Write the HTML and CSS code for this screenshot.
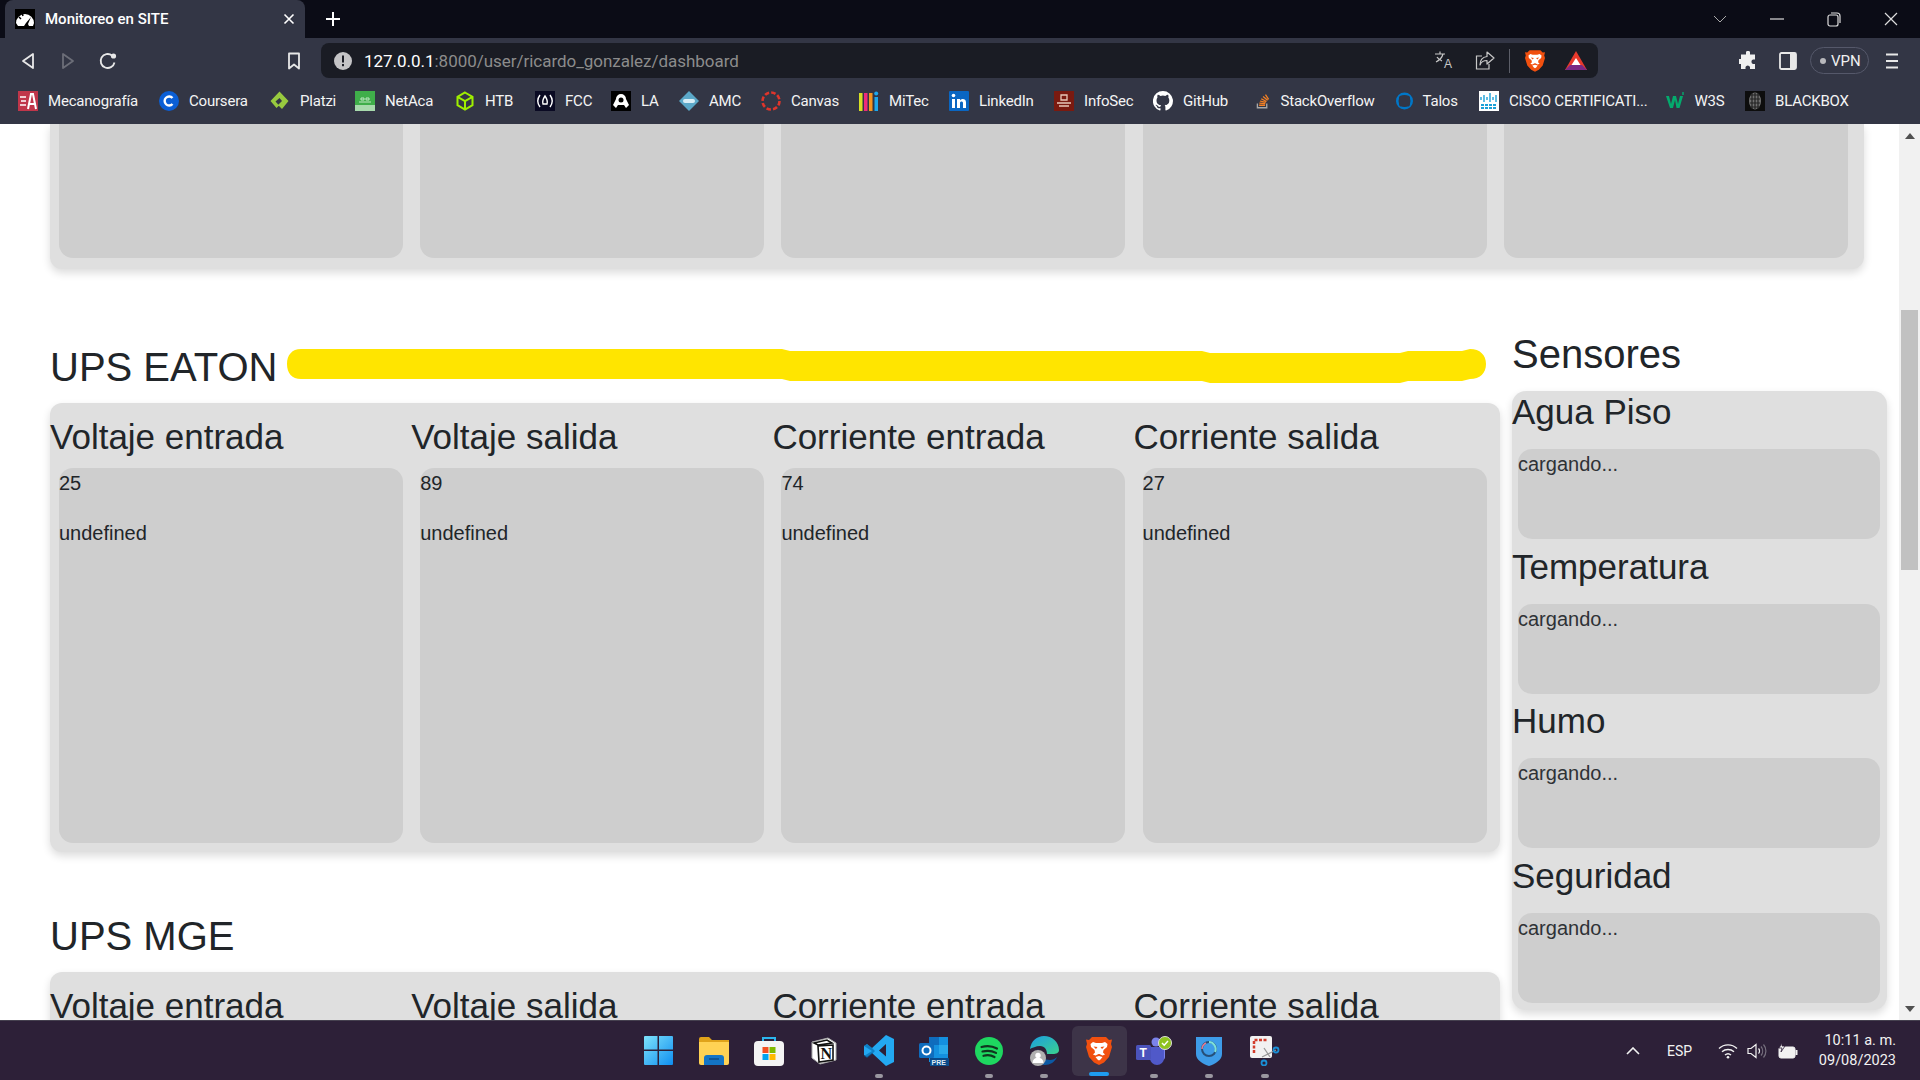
FILE: index.html
```html
<!DOCTYPE html>
<html lang="es">
<head>
<meta charset="utf-8">
<title>Monitoreo en SITE</title>
<link rel="stylesheet" href="styles.css">
</head>
<body>
<svg class="defs" width="0" height="0" aria-hidden="true">
  <defs>
    <symbol id="brave" viewBox="0 0 26 30">
      <path fill="#f1500f" d="M6 1h14l3 3 3-.5-1 4.500 1 3-3 10-5 5.500-5 2.500-5-2.500-5-5.500-3-10 1-3-1-4.500 3 .5z"/>
      <path fill="#fff" d="M7 6l3 1h6l3-1 2.500 2-.5 3-3.500 3-.5 2.500 2 2-2.500 1-3-1.500h-1l-3 1.500-2.500-1 2-2-.5-2.500L5 11l-.5-3zM9.500 21l3.500-1 3.500 1-2 2.500-1.500 1-1.500-1z"/>
      <path fill="#f1500f" d="M7.500 10.500l4 .5-1.500 2zM18.500 10.500l-4 .5 1.500 2z"/>
    </symbol>
    <linearGradient id="gWin" x1="0" y1="0" x2="1" y2="1"><stop offset="0" stop-color="#7ee3fb"/><stop offset="1" stop-color="#0f8ef0"/></linearGradient>
    <linearGradient id="gEdge" x1="0" y1="0" x2="1" y2="1"><stop offset="0" stop-color="#1b9de2"/><stop offset="1" stop-color="#3bd28e"/></linearGradient>
  </defs>
</svg>

<div class="screen">
  <header class="tabstrip">
    <div class="tab">
      <svg class="favicon" viewBox="0 0 20 20"><rect width="20" height="20" fill="#000"/><path fill="#fff" d="M1 14a9 9 0 0 1 18 0l-1 3h-4l-1-2 3-7-5 6-2 3H3z"/><path stroke="#000" stroke-width="1.500" d="M7 4l1 3M4 8l2 2"/></svg>
      <span class="tab-title">Monitoreo en SITE</span>
      <svg class="tab-close" viewBox="0 0 12 12"><path d="M1.500 1.500l9 9M10.500 1.500l-9 9" stroke="#fff" stroke-width="1.600"/></svg>
    </div>
    <div class="newtab"><svg width="16" height="16" viewBox="0 0 16 16"><path d="M8 1v14M1 8h14" stroke="#fff" stroke-width="2"/></svg></div>
    <div class="winctl">
      <div class="winbtn"><svg width="14" height="8" viewBox="0 0 14 8"><path d="M1 1l6 6 6-6" fill="none" stroke="#aaa" stroke-width="1"/></svg></div>
      <div class="winbtn"><svg width="14" height="2" viewBox="0 0 14 2"><path d="M0 1h14" stroke="#ddd" stroke-width="1.200"/></svg></div>
      <div class="winbtn"><svg width="14" height="15" viewBox="0 0 14 15"><rect x="1" y="3" width="10" height="11" rx="2" fill="none" stroke="#ddd" stroke-width="1.200"/><path d="M4 1h6a3 3 0 0 1 3 3v7" fill="none" stroke="#ddd" stroke-width="1.200"/></svg></div>
      <div class="winbtn"><svg width="14" height="14" viewBox="0 0 14 14"><path d="M1 1l12 12M13 1L1 13" stroke="#ddd" stroke-width="1.200"/></svg></div>
    </div>
  </header>

  <nav class="toolbar">
    <div class="tb-btn"><svg width="14" height="18" viewBox="0 0 14 18"><path d="M12 2v14L2 9z" fill="none" stroke="#e8e8e8" stroke-width="1.800" stroke-linejoin="round"/></svg></div>
    <div class="tb-btn"><svg width="14" height="18" viewBox="0 0 14 18"><path d="M2 2v14l10-7z" fill="none" stroke="#6c6e78" stroke-width="1.800" stroke-linejoin="round"/></svg></div>
    <div class="tb-btn"><svg width="18" height="18" viewBox="0 0 18 18"><path d="M15.500 10.500a7 7 0 1 1-2.500-7" fill="none" stroke="#e8e8e8" stroke-width="1.800"/><circle cx="14.500" cy="4" r="2.600" fill="#e8e8e8"/></svg></div>
    <div class="tb-btn tb-bookmark"><svg width="14" height="18" viewBox="0 0 14 18"><path d="M2 1.500h10v15l-5-4-5 4z" fill="none" stroke="#e8e8e8" stroke-width="1.800" stroke-linejoin="round"/></svg></div>
    <div class="omnibox">
      <svg class="omni-info" width="18" height="18" viewBox="0 0 18 18"><circle cx="9" cy="9" r="9" fill="#c4c4c6"/><rect x="8" y="3.500" width="2" height="7" fill="#1a1c24"/><rect x="8" y="12" width="2" height="2.200" fill="#1a1c24"/></svg>
      <div class="url"><span class="url-host">127.0.0.1</span><span class="url-rest">:8000/user/ricardo_gonzalez/dashboard</span></div>
      <div class="omni-act"><svg width="20" height="21" viewBox="0 0 20 21"><path d="M1 4h10M6 1.500V4M9 4c-1 4-3 6-7 8M3 7c1 2 3 3 5 4" fill="none" stroke="#c8c8c8" stroke-width="1.200"/><text class="glyph" x="10" y="18" font-size="12" fill="#c8c8c8">A</text></svg></div>
      <div class="omni-act"><svg width="20" height="19" viewBox="0 0 20 19"><path d="M7 5H1.500v13h12.500v-5" fill="none" stroke="#c8c8c8" stroke-width="1.200"/><path d="M12 1l7 6-7 6V9.500C8 9.500 6 11 5 14c0-5 3-8 7-8.500z" fill="none" stroke="#c8c8c8" stroke-width="1.200" stroke-linejoin="round"/></svg></div>
      <div class="omni-sep"></div>
      <div class="omni-act"><svg width="20" height="24"><use href="#brave"/></svg></div>
      <div class="omni-act"><svg width="22" height="20" viewBox="0 0 22 20"><path fill="#e8392c" d="M11 0L0 19h22z"/><path fill="#7b2a85" d="M0 19h22l-5-5H5z"/><path fill="#fff" d="M11 7l-4.500 7h9z"/></svg></div>
    </div>
    <div class="tb-btn tb-after"><svg width="19" height="19" viewBox="0 0 19 19"><path fill="#f0f0f0" d="M7 1a2.200 2.200 0 0 1 4 0v2.500h5v5h-2a2.400 2.400 0 0 0 0 4.500h2V18H11v-2a2.400 2.400 0 0 0-4.500 0v2H2v-5H.8a2.500 2.500 0 0 1 0-5H2V3.500h5z"/></svg></div>
    <div class="tb-btn"><svg width="18" height="18" viewBox="0 0 18 18"><rect x="1" y="1" width="16" height="16" rx="1.500" fill="none" stroke="#e8e8e8" stroke-width="1.800"/><rect x="11" y="1" width="6" height="16" fill="#e8e8e8"/></svg></div>
    <div class="vpn"><span class="vpn-dot"></span>VPN</div>
    <div class="tb-btn tb-menu"><svg width="14" height="16" viewBox="0 0 14 16"><path d="M1 1.500h12M1 8h12M1 14.500h12" stroke="#e8e8e8" stroke-width="1.800"/></svg></div>
  </nav>

  <div class="bookmarks">
    <div class="bm"><svg viewBox="0 0 20 20"><rect width="20" height="20" fill="#c0364a"/><path d="M2 6h6M3 10h5M2 14h6" stroke="#fff" stroke-width="1.400"/><path d="M10 18l3-15h2l3 15M11.500 13h5" fill="none" stroke="#fff" stroke-width="2"/></svg><span>Mecanografía</span></div>
    <div class="bm"><svg viewBox="0 0 20 20"><circle cx="10" cy="10" r="10" fill="#0b5fd6"/><path d="M13.500 7a4.500 4.500 0 1 0 0 6" fill="none" stroke="#fff" stroke-width="2.400"/></svg><span>Coursera</span></div>
    <div class="bm"><svg viewBox="0 0 20 20"><path d="M9.500 0.500L18.500 10l-6.500 8-4-4 4-4-2.500-3-4 3.500 3.500 4-2.500 2.500L0.500 10z" fill="#98ca3f"/></svg><span>Platzi</span></div>
    <div class="bm"><svg viewBox="0 0 20 20"><rect width="20" height="20" fill="#3fae4a"/><rect y="14" width="20" height="6" fill="#fff" opacity=".55"/><path d="M6 7h3v2H6zM11 7h3v2h-3zM4 11h12" stroke="#bfe8c2" fill="none"/></svg><span>NetAca</span></div>
    <div class="bm"><svg viewBox="0 0 20 20"><path d="M10 1.500l7.500 4.300v8.400L10 18.500l-7.500-4.300V5.800zM2.500 5.800L10 10l7.500-4.200M10 10v8.500" fill="none" stroke="#9fef00" stroke-width="2"/></svg><span>HTB</span></div>
    <div class="bm"><svg viewBox="0 0 20 20"><rect width="20" height="20" fill="#0a0a23"/><path d="M5 4c-3 4-3 8 0 12M15 4c3 4 3 8 0 12" fill="none" stroke="#fff" stroke-width="1.400"/><path d="M10 5c2 3 3 5 2 8h-4c-1-3 0-5 2-8z" fill="none" stroke="#fff" stroke-width="1.400"/></svg><span>FCC</span></div>
    <div class="bm"><svg viewBox="0 0 20 20"><rect width="20" height="20" fill="#000"/><path d="M10 3a5 5 0 0 1 5 5l3 6-3 3-2-3H7l-2 3-3-3 3-6a5 5 0 0 1 5-5z" fill="#fff"/><circle cx="10" cy="9" r="2.500" fill="#000"/></svg><span>LA</span></div>
    <div class="bm"><svg viewBox="0 0 20 20"><path d="M10 0l10 10-10 10L0 10z" fill="#5ba8c8"/><rect x="4" y="8" width="12" height="4" rx="2" fill="#d8eef6"/></svg><span>AMC</span></div>
    <div class="bm"><svg viewBox="0 0 20 20"><circle cx="10" cy="10" r="8.500" fill="none" stroke="#e0352b" stroke-width="2.600" stroke-dasharray="4.500 2.170"/></svg><span>Canvas</span></div>
    <div class="bm"><svg viewBox="0 0 20 20"><rect x="0" y="2" width="3.500" height="18" fill="#d7df23"/><rect x="5" y="2" width="3.500" height="18" fill="#ee2a7b"/><rect x="10" y="2" width="3.500" height="18" fill="#f7941d"/><rect x="15.500" y="6" width="3.500" height="14" fill="#1ca7ec"/><circle cx="17.200" cy="2.500" r="2" fill="#1ca7ec"/></svg><span>MiTec</span></div>
    <div class="bm"><svg viewBox="0 0 20 20"><rect width="20" height="20" rx="1" fill="#0a66c2"/><path d="M3 8h3v9H3zM8 8h3v1.500c1-2 6-2.500 6 2V17h-3v-5c0-2-3-2-3 0v5H8z" fill="#fff"/><circle cx="4.500" cy="4.500" r="1.800" fill="#fff"/></svg><span>LinkedIn</span></div>
    <div class="bm"><svg viewBox="0 0 20 20"><rect width="20" height="20" fill="#7a1a10"/><path d="M7 4h6v5H7zM3 12h14M5 15h10" stroke="#e8c8b8" fill="none" stroke-width="1.300"/></svg><span>InfoSec</span></div>
    <div class="bm"><svg viewBox="0 0 20 20"><path fill="#fff" d="M10 0a10 10 0 0 0-3.200 19.500c.5.100.7-.2.700-.5v-1.800c-2.800.6-3.400-1.300-3.400-1.300-.4-1.100-1.100-1.500-1.100-1.500-.9-.6.100-.6.100-.6 1 .1 1.500 1 1.500 1 .9 1.500 2.300 1.100 2.900.8.100-.6.300-1.100.6-1.300-2.200-.3-4.600-1.100-4.600-5 0-1.100.4-2 1-2.700-.1-.2-.4-1.300.1-2.700 0 0 .8-.3 2.800 1a9 9 0 0 1 5 0c1.900-1.300 2.800-1 2.800-1 .5 1.400.2 2.500.1 2.700.6.700 1 1.600 1 2.700 0 3.900-2.300 4.700-4.600 5 .4.300.7.900.7 1.900V19c0 .3.200.6.700.5A10 10 0 0 0 10 0z"/></svg><span>GitHub</span></div>
    <div class="bm bm-narrow"><svg viewBox="0 0 20 20"><path d="M4 13v5h11v-5" fill="none" stroke="#a8a8a8" stroke-width="1.600"/><path d="M6 15h7M6.300 12.500l7 .5M7 10l6.800 1.600M8.500 7.300l6.200 3.300M10.700 4.600l5.300 4.500M13.500 2.500l3.700 5.500" stroke="#f48024" stroke-width="1.500"/></svg><span>StackOverflow</span></div>
    <div class="bm bm-narrow"><svg viewBox="0 0 20 20"><circle cx="10" cy="10" r="8.500" fill="none" stroke="#0077c8" stroke-width="3"/><rect x="3.500" y="3.500" width="13" height="13" rx="3" fill="#333645"/></svg><span>Talos</span></div>
    <div class="bm"><svg viewBox="0 0 20 20"><rect width="20" height="20" fill="#fff"/><path d="M2 6v3M5 4v7M8 6v3M11 2v9M14 6v3M17 4v7" stroke="#1ba0d7" stroke-width="1.400"/><path d="M2 14h16M2 17h16" stroke="#1ba0d7" stroke-width="2" stroke-dasharray="3 1"/></svg><span>CISCO CERTIFICATI...</span></div>
    <div class="bm"><svg viewBox="0 0 20 20"><path d="M1 5h3l2 8 2-8h3l2 8 2-8h3l-3.500 12h-3L10 9l-2 8H5z" fill="#04aa6d"/><path d="M17 1h2v3h-2z" fill="#04aa6d" opacity=".7"/></svg><span>W3S</span></div>
    <div class="bm"><svg viewBox="0 0 20 20"><rect width="20" height="20" fill="#0d0d0d"/><ellipse cx="10" cy="10" rx="6" ry="8.500" fill="#8a8a8a" opacity=".8"/><path d="M5 4h10M5 8h10M5 12h10M5 16h10M7 2v16M10 2v16M13 2v16" stroke="#222" stroke-width="1.200"/></svg><span>BLACKBOX</span></div>
  </div>

  <div class="viewport">
    <main class="page">
      <section class="panel panel-top">
        <div class="cell"><div class="card card-short"></div></div>
        <div class="cell"><div class="card card-short"></div></div>
        <div class="cell"><div class="card card-short"></div></div>
        <div class="cell"><div class="card card-short"></div></div>
        <div class="cell"><div class="card card-short"></div></div>
      </section>

      <div class="columns">
        <div class="col-main">
          <div class="heading-row">
            <h2>UPS EATON</h2>
            <svg class="scribble" width="1199" height="36" viewBox="0 0 1199 36"><path fill="#ffe500" d="M14 2H495l8 2H915l8 2H1113l8-2H1175l8-2c10 0 16 6 16 15s-6 15-16 15l-8 2H1121l-8 2H923l-8-2H503l-8-2H14C5 32 0 26 0 17S5 2 14 2z"/></svg>
          </div>
          <section class="panel panel-ups">
            <div class="cell"><h3>Voltaje entrada</h3><div class="card card-tall"><p>25</p><p>undefined</p></div></div>
            <div class="cell"><h3>Voltaje salida</h3><div class="card card-tall"><p>89</p><p>undefined</p></div></div>
            <div class="cell"><h3>Corriente entrada</h3><div class="card card-tall"><p>74</p><p>undefined</p></div></div>
            <div class="cell"><h3>Corriente salida</h3><div class="card card-tall"><p>27</p><p>undefined</p></div></div>
          </section>

          <h2 class="heading-next">UPS MGE</h2>
          <section class="panel panel-ups">
            <div class="cell"><h3>Voltaje entrada</h3></div>
            <div class="cell"><h3>Voltaje salida</h3></div>
            <div class="cell"><h3>Corriente entrada</h3></div>
            <div class="cell"><h3>Corriente salida</h3></div>
          </section>
        </div>

        <aside class="col-side">
          <h2>Sensores</h2>
          <section class="panel panel-side">
            <div class="sensor"><h3>Agua Piso</h3><div class="card card-sensor">cargando...</div></div>
            <div class="sensor"><h3>Temperatura</h3><div class="card card-sensor">cargando...</div></div>
            <div class="sensor"><h3>Humo</h3><div class="card card-sensor">cargando...</div></div>
            <div class="sensor"><h3>Seguridad</h3><div class="card card-sensor">cargando...</div></div>
          </section>
        </aside>
      </div>
    </main>
    <div class="scrollbar">
      <svg class="sb-arrow" width="10" height="6" viewBox="0 0 10 6"><path d="M5 0l5 6H0z" fill="#505050"/></svg>
      <div class="sb-thumb"></div>
      <svg class="sb-arrow sb-arrow-down" width="10" height="6" viewBox="0 0 10 6"><path d="M0 0h10L5 6z" fill="#505050"/></svg>
    </div>
  </div>

  <footer class="taskbar">
    <div class="task-icons">
      <div class="task"><svg width="29" height="29" viewBox="0 0 29 29"><path fill="url(#gWin)" d="M0 1a1 1 0 0 1 1-1h12.500v13.500H0zM15 0h13a1 1 0 0 1 1 1v12.500H15zM0 15h13.500v14H1a1 1 0 0 1-1-1zM15 15h14v13a1 1 0 0 1-1 1H15z"/></svg></div>
      <div class="task"><svg width="30" height="28" viewBox="0 0 30 28"><path fill="#e0a31a" d="M0 2a2 2 0 0 1 2-2h8l3 3h17v6H0z"/><path fill="#ffd254" d="M0 5h30v21a2 2 0 0 1-2 2H2a2 2 0 0 1-2-2z"/><path fill="#1475c6" d="M5 28v-7a3 3 0 0 1 3-3h14a3 3 0 0 1 3 3v7z"/><path d="M10 22h10" stroke="#0b4a85" stroke-width="1.400"/></svg></div>
      <div class="task"><svg width="30" height="30" viewBox="0 0 30 30"><path d="M9 7V2h12v5" fill="none" stroke="#2bb6ee" stroke-width="2"/><rect y="5" width="30" height="25" rx="4" fill="#f4f4f4"/><rect x="8.500" y="11" width="6" height="6" fill="#f25022"/><rect x="15.500" y="11" width="6" height="6" fill="#7fba00"/><rect x="8.500" y="18" width="6" height="6" fill="#00a4ef"/><rect x="15.500" y="18" width="6" height="6" fill="#ffb900"/></svg></div>
      <div class="task"><svg width="26" height="28" viewBox="0 0 26 28"><path d="M1 5l16-4 8 5v17l-16 4-8-6z" fill="#fff" stroke="#aaa"/><path d="M3 6l13-3 5 3-14 2zM7 9l15-1v15L8 25z" fill="#fff" stroke="#111" stroke-width="1.600"/><text class="glyph glyph-serif" x="9.500" y="22" font-size="16" font-weight="700" fill="#111">N</text></svg></div>
      <div class="task"><svg width="30" height="31" viewBox="0 0 30 31"><path fill="#23a9f2" d="M22 0l8 4v23l-8 4-14-13-5 4-3-2v-9l3-2 5 4zm0 9l-7 6.500 7 6z"/><path fill="#0065a9" d="M0 11l3-2 5 4 3 3-3 3-5 4-3-2 8-5z" opacity=".6"/></svg></div>
      <div class="task"><svg width="30" height="30" viewBox="0 0 30 30"><rect x="10" y="1" width="19" height="25" fill="#1490df"/><rect x="10" y="1" width="10" height="8" fill="#0f6cbd"/><rect x="20" y="9" width="9" height="9" fill="#28a8ea"/><rect y="7" width="15" height="15" rx="1.500" fill="#0f6cbd"/><circle cx="7.500" cy="14.500" r="4" fill="none" stroke="#fff" stroke-width="2"/><rect x="11" y="22" width="19" height="8" fill="#0a4a8a"/><text class="glyph" x="12.500" y="29" font-size="7" font-weight="700" fill="#dfeaf5">PRE</text></svg></div>
      <div class="task"><svg width="28" height="28" viewBox="0 0 28 28"><circle cx="14" cy="14" r="14" fill="#1ed760"/><path d="M6.500 10c5-1.500 11-1 15.500 1.500M7.500 14.500c4.500-1.200 9.500-.8 13.500 1.400M8.500 18.800c3.800-1 7.800-.6 11 1.200" fill="none" stroke="#10351f" stroke-width="2.200" stroke-linecap="round"/></svg></div>
      <div class="task"><svg width="30" height="30" viewBox="0 0 30 30"><path fill="url(#gEdge)" d="M1 13C2 5 8 0 15 0c8 0 15 6 15 14 0 3-3 4-6 4h-6c0-4-2-8-7-8-4 0-8 2-10 3z"/><path fill="#0c59a4" d="M9 13c2 8 7 11 12 11 3 0 5-1 7-3-2 5-7 8-12 8C9 29 5 22 9 13z"/><circle cx="9" cy="22" r="8" fill="#b0b0b0"/><circle cx="9" cy="19.500" r="2.700" fill="#fff"/><path d="M3.500 27a5.500 5.500 0 0 1 11 0z" fill="#fff"/></svg></div>
      <div class="task task-active"><svg width="26" height="30"><use href="#brave"/></svg></div>
      <div class="task"><svg width="36" height="30" viewBox="0 0 36 30"><circle cx="20" cy="6" r="4.500" fill="#7b83eb"/><rect x="12" y="11" width="17" height="13" rx="3" fill="#7b83eb"/><path d="M14 11h14v11a7 7 0 0 1-14 0z" fill="#5059c9"/><circle cx="29" cy="10" r="3.500" fill="#5059c9"/><rect x="0" y="9" width="15" height="15" rx="1.500" fill="#4b53bc"/><text class="glyph" x="3.500" y="21" font-size="12" font-weight="700" fill="#fff">T</text><circle cx="29" cy="7" r="6.500" fill="#8fc31f" stroke="#ddd"/><path d="M26 7l2.200 2.200L32 5" fill="none" stroke="#fff" stroke-width="1.500"/></svg></div>
      <div class="task"><svg width="26" height="30" viewBox="0 0 26 30"><path d="M0 1h26v17c0 6-7 10-13 12C7 28 0 24 0 18z" fill="#3e9ce8"/><circle cx="13" cy="13" r="7" fill="none" stroke="#264f78" stroke-width="2"/><path d="M13 6a7 7 0 0 1 6 10" fill="none" stroke="#7ee0d8" stroke-width="2"/><path d="M6 13a7 7 0 0 1 4-6" fill="none" stroke="#e87a90" stroke-width="1.500"/></svg></div>
      <div class="task"><svg width="30" height="30" viewBox="0 0 30 30"><rect width="22" height="22" rx="2" fill="#f2f2f2"/><path d="M4 17V4h13" fill="none" stroke="#d33d2c" stroke-width="2.500" stroke-dasharray="3 1.500"/><path d="M14 12l6 9M26 14l-14 7" stroke="#9a9a9a" stroke-width="1.300"/><circle cx="26" cy="14" r="2.500" fill="none" stroke="#1a8fd6" stroke-width="1.800"/><circle cx="14" cy="27" r="2.500" fill="none" stroke="#1a8fd6" stroke-width="1.800"/></svg></div>
    </div>
    <div class="tray">
      <svg class="tray-chev" width="14" height="8" viewBox="0 0 14 8"><path d="M1 7l6-6 6 6" fill="none" stroke="#f2f2f2" stroke-width="1.600"/></svg>
      <span class="tray-lang">ESP</span>
      <svg class="tray-wifi" width="20" height="16" viewBox="0 0 20 16"><path d="M1 5.500a13 13 0 0 1 18 0M4 8.800a9 9 0 0 1 12 0M7 12a4.500 4.500 0 0 1 6 0" fill="none" stroke="#f2f2f2" stroke-width="1.400"/><circle cx="10" cy="14.300" r="1.300" fill="#f2f2f2"/></svg>
      <svg class="tray-vol" width="20" height="16" viewBox="0 0 20 16"><path d="M1 5.500h3l5-4v13l-5-4H1z" fill="none" stroke="#f2f2f2" stroke-width="1.200"/><path d="M11.500 5.500a3.500 3.500 0 0 1 0 5" fill="none" stroke="#f2f2f2" stroke-width="1.200"/><path d="M14 3.500a7 7 0 0 1 0 9M16.500 1.500a10 10 0 0 1 0 13" fill="none" stroke="#76707e" stroke-width="1.200"/></svg>
      <svg class="tray-bat" width="20" height="16" viewBox="0 0 20 16"><rect x="1" y="4" width="16" height="11" rx="2" fill="#f2f2f2" stroke="#f2f2f2"/><rect x="17.500" y="7" width="2" height="5" fill="#f2f2f2"/><path d="M4 0L1 5h3l-1 4 4-6H4z" fill="#f2f2f2" stroke="#2d2038" stroke-width=".8"/></svg>
      <div class="clock"><span>10:11 a. m.</span><span>09/08/2023</span></div>
    </div>
  </footer>
</div>
</body>
</html>
```

FILE: styles.css
```css
* { box-sizing: border-box; }
html, body { margin: 0; height: 100%; overflow: hidden; }
body { font-family: "Liberation Sans", Arial, sans-serif; color: #212529; background: #fff; }
.defs { display: block; height: 0; }
.glyph { font-family: "Liberation Sans", Arial, sans-serif; }
.glyph-serif { font-family: "Liberation Serif", serif; }

.screen { display: flex; flex-direction: column; width: 1920px; height: 1080px; }

/* browser chrome */
.tabstrip { display: flex; align-items: stretch; height: 38px; padding-left: 5px; background: #0b0c16; color: #fff; font-family: Roboto, sans-serif; flex: none; }
.tab { display: flex; align-items: center; width: 300px; padding: 0 10px; background: #333645; border-radius: 8px 8px 0 0; }
.favicon { width: 20px; height: 20px; flex: none; }
.tab-title { margin-left: 10px; font-size: 15px; font-weight: 500; flex: 1; }
.tab-close { width: 12px; height: 12px; margin-right: 0; }
.newtab { display: flex; align-items: center; justify-content: center; width: 40px; margin-left: 8px; }
.winctl { display: flex; margin-left: auto; margin-right: 1px; }
.winbtn { display: flex; align-items: center; justify-content: center; width: 57px; }

.toolbar { display: flex; align-items: center; height: 46px; padding: 5px 0 6px 8px; background: #333645; flex: none; font-family: Roboto, sans-serif; }
.tb-btn { display: flex; align-items: center; justify-content: center; width: 40px; height: 35px; flex: none; }
.tb-bookmark { margin-left: 146px; margin-right: 7px; }
.omnibox { display: flex; align-items: center; width: 1277px; height: 35px; padding: 0 2px 0 13px; background: #1a1c24; border-radius: 8px; flex: none; }
.omni-info { flex: none; }
.url { flex: 1; margin-left: 12px; font-size: 17px; letter-spacing: -.03px; white-space: nowrap; }
.url-host { color: #fff; }
.url-rest { color: #8c8c8c; }
.omni-act { display: flex; align-items: center; justify-content: center; width: 41px; height: 35px; }
.omni-sep { width: 1px; height: 24px; background: #5c5e68; margin: 0 4px; }
.tb-after { margin-left: 130px; }
.vpn { display: flex; align-items: center; gap: 5px; width: 59px; height: 27px; margin-left: 2px; padding-left: 9px; border: 1.500px solid #55586a; border-radius: 14px; color: #f0f0f0; font-size: 15px; flex: none; }
.vpn-dot { width: 6px; height: 6px; border-radius: 50%; background: #b8b8bc; flex: none; }
.tb-menu { width: 46px; }

.bookmarks { display: grid; grid-template-columns: 141px 111px 85px 100px 80px 76px 68px 82px 98px 90px 105px 99px 100.500px 142px 83.500px 185.500px 80.500px auto; height: 40px; padding: 7px 0 0 18px; background: #333645; color: #f4f4f4; font-family: Roboto, sans-serif; font-size: 15px; letter-spacing: -.2px; flex: none; }
.bm { display: flex; align-items: flex-start; gap: 10px; line-height: 20px; white-space: nowrap; }
.bm svg { width: 20px; height: 20px; flex: none; }
.bm-narrow svg { width: 17px; }

/* page */
.viewport { display: flex; flex: 1; min-height: 0; background: #fff; }
.page { flex: 1; min-width: 0; overflow: hidden; padding-left: 50px; }

.panel { background: #dfdfdf; border-radius: 0 0 12px 12px; box-shadow: 0 4px 8px rgba(0, 0, 0, .14); }
.panel-top { display: grid; grid-template-columns: repeat(5, 361.200px); width: 1814px; padding-bottom: 11px; }
.panel-ups { display: grid; grid-template-columns: repeat(4, 361.200px); width: 1450px; padding: 15px 0 9px; border-radius: 12px; }
.cell { min-width: 0; }
.card { background: #cecece; border-radius: 14px; }
.card-short { height: 134px; margin: 0 8.200px 0 9px; border-radius: 0 0 14px 14px; }
.card-tall { height: 375px; margin: 11.600px 8.200px 0 9px; padding-top: 0; font-size: 20px; }
.card-tall p { margin: 0 0 20px; line-height: 30px; }

.columns { display: flex; gap: 12px; margin-top: 61px; align-items: flex-start; }
.col-main { width: 1450px; padding-top: 13px; flex: none; }
.col-side { width: 375px; flex: none; }

h2 { margin: 0; font-size: 40px; font-weight: 400; line-height: 48px; white-space: nowrap; }
h3 { margin: 0; font-size: 35px; font-weight: 400; line-height: 38.400px; white-space: nowrap; }

.heading-row { display: flex; align-items: flex-start; margin-bottom: 12px; }
.scribble { margin: 4px 14px 0 auto; flex: none; }
.heading-next { margin: 60px 0 12px; }

.col-side h2 { margin-bottom: 13px; }
.panel-side { padding: 2px 7px 7px 0; border-radius: 14px; }
.sensor + .sensor { margin-top: 8.670px; }
.card-sensor { height: 90px; margin: 17.600px 0 0 6px; font-size: 20px; line-height: 30px; color: #2f3236; border-radius: 14px; }

.scrollbar { display: flex; flex-direction: column; align-items: center; width: 21px; background: #f1f1f1; flex: none; }
.sb-arrow { margin-top: 9px; flex: none; }
.sb-thumb { width: 17px; height: 260px; margin-top: 171px; background: #c1c1c1; flex: none; }
.sb-arrow-down { margin-top: auto; margin-bottom: 8px; }

/* taskbar */
.taskbar { display: flex; align-items: center; justify-content: center; position: relative; height: 60px; background: #2d2038; border-top: 1px solid #45404f; color: #f2f2f2; font-family: Roboto, sans-serif; flex: none; }
.task-icons { display: flex; margin-left: 3px; }
.task { position: relative; display: flex; align-items: center; justify-content: center; width: 55.100px; height: 50px; border-radius: 6px; }
.task:nth-child(5)::after, .task:nth-child(7)::after, .task:nth-child(8)::after, .task:nth-child(10)::after, .task:nth-child(11)::after, .task:nth-child(12)::after { content: ""; position: absolute; left: 50%; bottom: -2px; width: 8px; height: 4px; margin-left: -4px; border-radius: 2px; background: #9a97a0; }
.task-active { background: #3d3448; }
.task-active::after { content: ""; position: absolute; left: 50%; bottom: 0; width: 20px; height: 4px; margin-left: -10px; border-radius: 2px; background: #1e9bf0; }
.tray { position: absolute; top: 0; bottom: 0; left: 1626px; right: 24px; display: flex; align-items: center; }
.tray-lang { margin-left: 27px; font-size: 14px; }
.tray-wifi { margin-left: 26px; }
.tray-vol { margin-left: 9px; }
.tray-bat { margin-left: 11px; }
.clock { display: flex; flex-direction: column; align-items: flex-end; gap: 2px; margin-left: auto; font-size: 14.500px; line-height: 18px; }
```
